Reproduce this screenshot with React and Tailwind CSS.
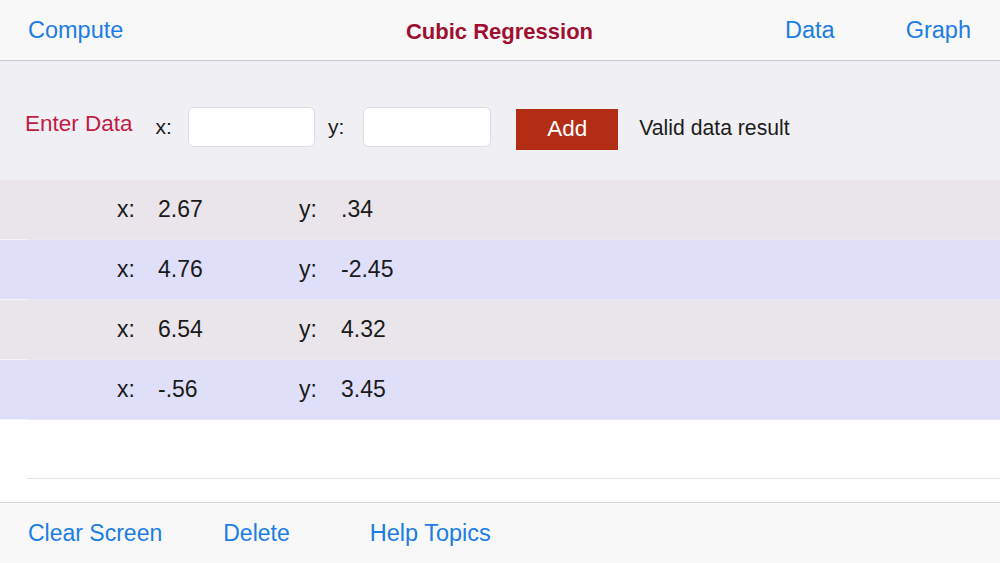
import React from 'react';

const rows = [
  { x: '2.67', y: '.34', bg: 'bg-[#e9e5eb]' },
  { x: '4.76', y: '-2.45', bg: 'bg-[#dfdffa]' },
  { x: '6.54', y: '4.32', bg: 'bg-[#e9e5eb]' },
  { x: '-.56', y: '3.45', bg: 'bg-[#dfdffa]' },
];

export default function App() {
  return (
    <div className="w-[1000px] h-[563px] flex flex-col bg-white font-['Liberation_Sans',Arial,sans-serif] overflow-hidden">
      {/* Nav bar */}
      <div className="h-[61px] shrink-0 flex items-center pt-[2px] bg-[#f8f8f8] border-b border-[#c8c7cc] text-[23.5px]">
        <div className="flex-1 pl-[28px] text-[#1c7de2]">Compute</div>
        <div className="text-[22px] font-bold text-[#9f0f30]">Cubic Regression</div>
        <div className="flex-1 flex justify-end pr-[29px] gap-[71px] text-[#1c7de2]">
          <span>Data</span>
          <span>Graph</span>
        </div>
      </div>

      {/* Entry section */}
      <div className="h-[119px] shrink-0 flex items-center bg-[#efeff4] pl-[25px] pt-[12px] text-[#1c1c1c]">
        <span className="text-[22.5px] text-[#c01c44] -mt-[5px]">Enter Data</span>
        <span className="ml-[23px] text-[21px]">x:</span>
        <div className="ml-[16px] w-[127px] h-[40px] bg-white rounded-[6px] border border-[#dcdce2]" />
        <span className="ml-[13px] text-[21px]">y:</span>
        <div className="ml-[19px] w-[128px] h-[40px] bg-white rounded-[6px] border border-[#dcdce2]" />
        <div className="ml-[25px] w-[102px] h-[41px] mt-[5px] bg-[#b32d14] flex items-center justify-center text-white text-[22.5px]">Add</div>
        <span className="ml-[21px] text-[21.2px] mt-[2px]">Valid data result</span>
      </div>

      {/* Data rows */}
      {rows.map((r, i) => (
        <div key={i} className={`shrink-0 ${r.bg}`}>
          <div className="h-[59px] flex items-center pl-[117px] text-[23px] text-[#1a1a1a]">
            <span className="w-[41px]">x:</span>
            <span className="w-[141px]">{r.x}</span>
            <span className="w-[42px]">y:</span>
            <span>{r.y}</span>
          </div>
          <div className="h-px flex">
            <div className="w-[27px] bg-[#f4f3f7]" />
            <div className="flex-1 bg-[#ebe9ef]" />
          </div>
        </div>
      ))}

      {/* Empty area */}
      <div className="flex-1 flex flex-col">
        <div className="h-[58px]" />
        <div className="h-px ml-[27px] bg-[#e3e3e6]" />
      </div>

      {/* Bottom toolbar */}
      <div className="h-[61px] shrink-0 flex items-center pt-[1px] bg-[#f8f8f8] border-t border-[#d6d6da] pl-[28px] text-[23px] text-[#1c7de2]">
        <span>Clear Screen</span>
        <span className="ml-[61px]">Delete</span>
        <span className="ml-[80px] text-[23.5px]">Help Topics</span>
      </div>
    </div>
  );
}
